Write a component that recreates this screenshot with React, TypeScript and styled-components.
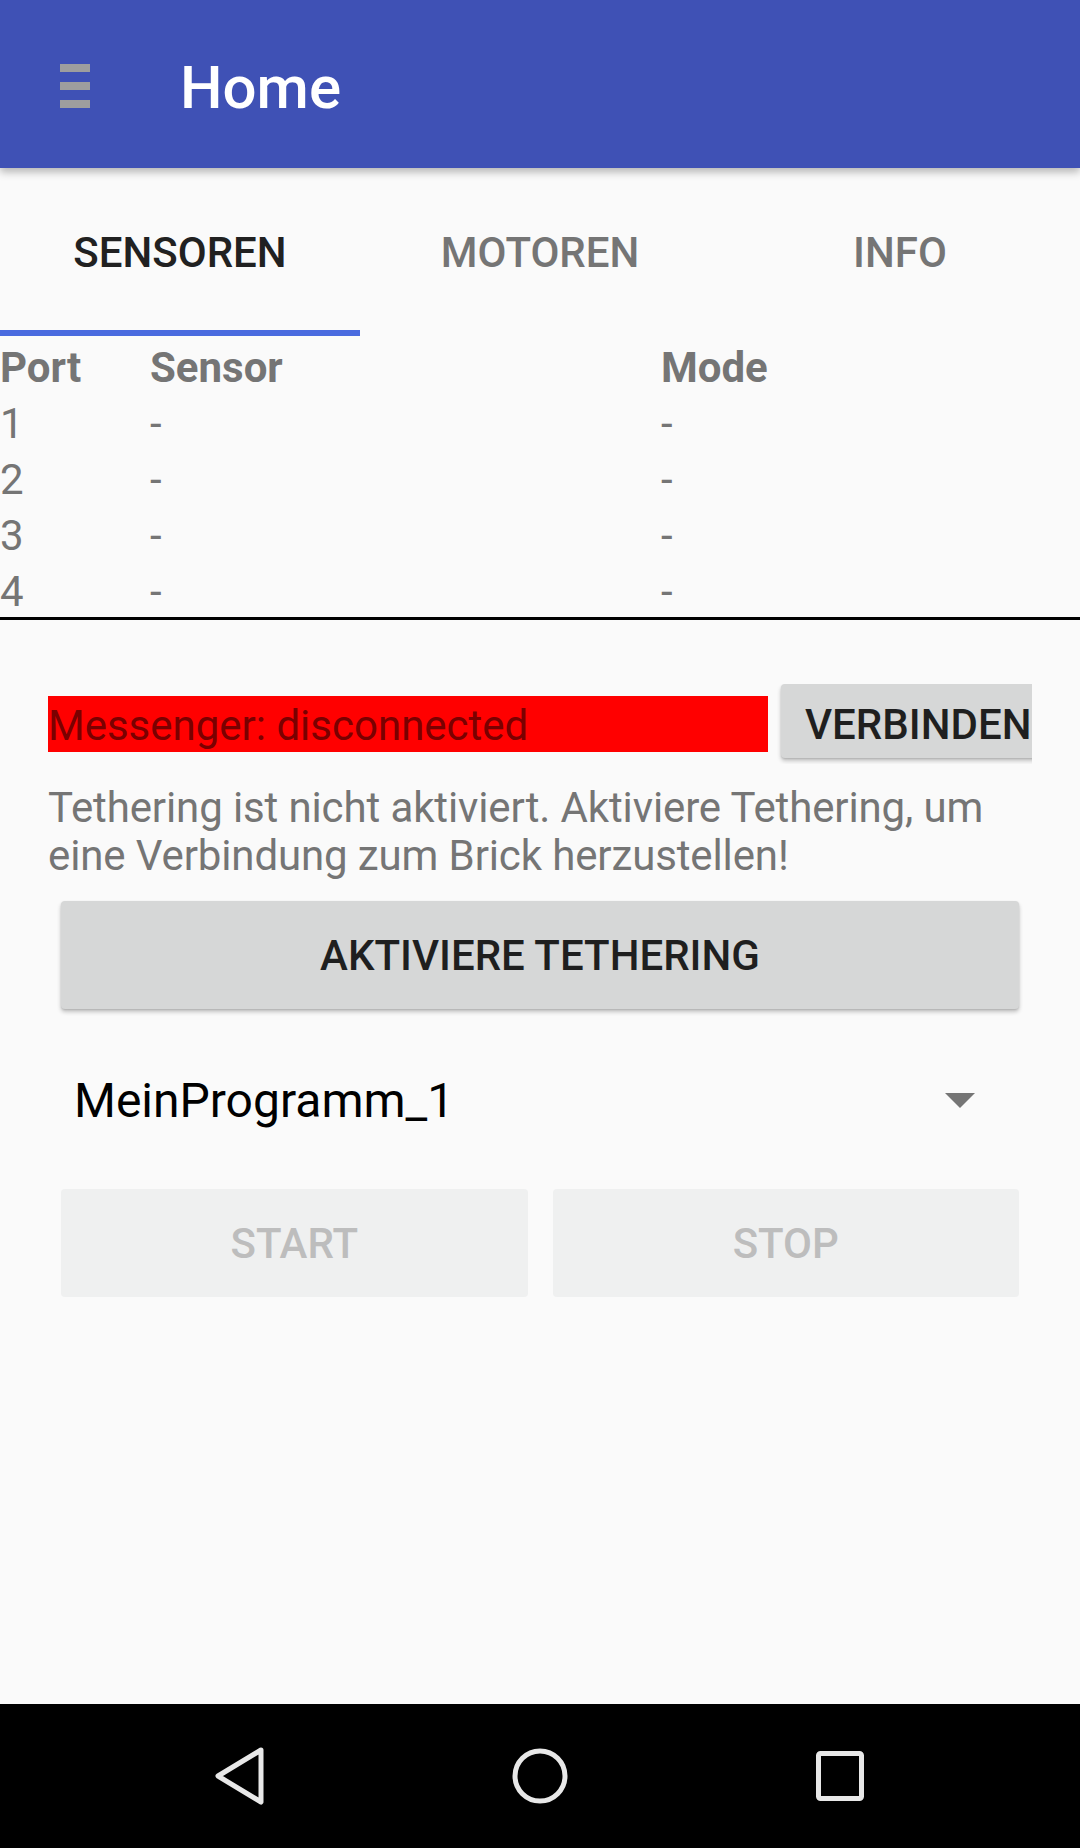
import styled, { createGlobalStyle } from 'styled-components';

const GlobalStyle = createGlobalStyle`
  html, body {
    margin: 0;
    padding: 0;
    background: #fafafa;
    font-family: Roboto, "Noto Sans", sans-serif;
  }
  * { box-sizing: border-box; }
`;

const Screen = styled.div`
  width: 1080px;
  height: 1848px;
  display: flex;
  flex-direction: column;
  background: #fafafa;
  overflow: hidden;
`;

const AppBar = styled.header`
  position: relative;
  z-index: 2;
  height: 168px;
  flex-shrink: 0;
  display: flex;
  align-items: center;
  padding: 4px 0 0 60px;
  background: #3f51b5;
  box-shadow: 0 4px 8px rgba(0, 0, 0, 0.28);
`;

const Hamburger = styled.div`
  display: flex;
  flex-direction: column;
  gap: 10px;
  span {
    display: block;
    width: 30px;
    height: 8px;
    background: #9e9e9e;
  }
`;

const Title = styled.h1`
  margin: 0 0 0 90px;
  font-size: 60px;
  font-weight: 500;
  color: #fff;
  padding-top: 2px;
`;

const TabBar = styled.nav`
  display: grid;
  grid-template-columns: repeat(3, 1fr);
  height: 168px;
  flex-shrink: 0;
`;

const Tab = styled.div<{ $active?: boolean }>`
  display: flex;
  align-items: center;
  justify-content: center;
  padding-top: 6px;
  border-bottom: 6px solid ${p => (p.$active ? '#4a6bdf' : 'transparent')};
  font-size: 42px;
  font-weight: 500;
  color: ${p => (p.$active ? '#212121' : '#757575')};
`;

const Table = styled.div`
  height: 284px;
  padding-top: 4px;
  overflow: hidden;
  border-bottom: 3px solid #000;
  flex-shrink: 0;
`;

const TableRow = styled.div<{ $head?: boolean }>`
  display: grid;
  grid-template-columns: 150px 511px 1fr;
  height: 56px;
  line-height: 56px;
  font-size: 42px;
  font-weight: ${p => (p.$head ? 700 : 400)};
  color: #757575;
`;

const Content = styled.main`
  flex: 1;
  padding: 0 48px;
`;

const MessengerRow = styled.div`
  display: flex;
  align-items: flex-start;
  margin-top: 64px;
  padding-bottom: 6px;
  overflow: hidden;
`;

const StatusLabel = styled.div`
  flex: 0 0 720px;
  height: 56px;
  margin-top: 12px;
  padding-top: 3px;
  line-height: 53px;
  background: #ff0000;
  color: #7a0000;
  font-size: 42px;
  white-space: nowrap;
`;

const RaisedButton = styled.button`
  border: none;
  border-radius: 4px;
  background: #d6d7d7;
  color: #1f1f1f;
  font-family: Roboto, "Noto Sans", sans-serif;
  font-size: 42px;
  font-weight: 500;
  box-shadow: 0 3px 4px rgba(0, 0, 0, 0.22), 0 1px 2px rgba(0, 0, 0, 0.12);
  padding: 0 24px;
`;

const ConnectButton = styled(RaisedButton)`
  flex-shrink: 0;
  height: 74px;
  margin-left: 13px;
  padding-top: 6px;
  white-space: nowrap;
`;

const Hint = styled.p`
  margin: 20px 0 0;
  font-size: 42px;
  line-height: 48px;
  letter-spacing: -0.12px;
  color: #757575;
`;

const TetherButton = styled(RaisedButton)`
  display: block;
  width: calc(100% - 26px);
  height: 108px;
  margin: 21px 13px 0;
`;

const Spinner = styled.div`
  display: flex;
  align-items: center;
  justify-content: space-between;
  height: 144px;
  margin-top: 19px;
  padding: 0 57px 0 26px;
  font-size: 48px;
  color: #000;
`;

const Arrow = styled.span`
  width: 0;
  height: 0;
  border-left: 15px solid transparent;
  border-right: 15px solid transparent;
  border-top: 15px solid #757575;
`;

const ActionRow = styled.div`
  display: grid;
  grid-template-columns: 1fr 1fr;
  gap: 25px;
  margin: 17px 13px 0;
`;

const FlatButton = styled.button`
  height: 108px;
  border: none;
  border-radius: 4px;
  background: #eff0f0;
  color: #bdbdbd;
  font-family: Roboto, "Noto Sans", sans-serif;
  font-size: 42px;
  font-weight: 500;
`;

const NavBar = styled.footer`
  height: 144px;
  flex-shrink: 0;
  background: #000;
  display: grid;
  grid-template-columns: repeat(3, 300px);
  padding: 0 90px;
  align-items: center;
  justify-items: center;
`;

const ports = ['1', '2', '3', '4'];

export default function App() {
  return (
    <>
      <GlobalStyle />
      <Screen>
        <AppBar>
          <Hamburger>
            <span />
            <span />
            <span />
          </Hamburger>
          <Title>Home</Title>
        </AppBar>

        <TabBar>
          <Tab $active>SENSOREN</Tab>
          <Tab>MOTOREN</Tab>
          <Tab>INFO</Tab>
        </TabBar>

        <Table>
          <TableRow $head>
            <span>Port</span>
            <span>Sensor</span>
            <span>Mode</span>
          </TableRow>
          {ports.map(p => (
            <TableRow key={p}>
              <span>{p}</span>
              <span>-</span>
              <span>-</span>
            </TableRow>
          ))}
        </Table>

        <Content>
          <MessengerRow>
            <StatusLabel>Messenger: disconnected</StatusLabel>
            <ConnectButton>VERBINDEN</ConnectButton>
          </MessengerRow>
          <Hint>
            Tethering ist nicht aktiviert. Aktiviere Tethering, um eine Verbindung zum Brick herzustellen!
          </Hint>
          <TetherButton>AKTIVIERE TETHERING</TetherButton>
          <Spinner>
            <span>MeinProgramm_1</span>
            <Arrow />
          </Spinner>
          <ActionRow>
            <FlatButton disabled>START</FlatButton>
            <FlatButton disabled>STOP</FlatButton>
          </ActionRow>
        </Content>

        <NavBar>
          <svg width="60" height="60" viewBox="0 0 60 60">
            <polygon points="51,4 8,30 51,56" fill="none" stroke="#e8e8e8" strokeWidth="5" strokeLinejoin="round" />
          </svg>
          <svg width="60" height="60" viewBox="0 0 60 60">
            <circle cx="30" cy="30" r="25" fill="none" stroke="#e8e8e8" strokeWidth="5" />
          </svg>
          <svg width="60" height="60" viewBox="0 0 60 60">
            <rect x="8.5" y="7.5" width="43" height="45" rx="2" fill="none" stroke="#e8e8e8" strokeWidth="5" />
          </svg>
        </NavBar>
      </Screen>
    </>
  );
}
